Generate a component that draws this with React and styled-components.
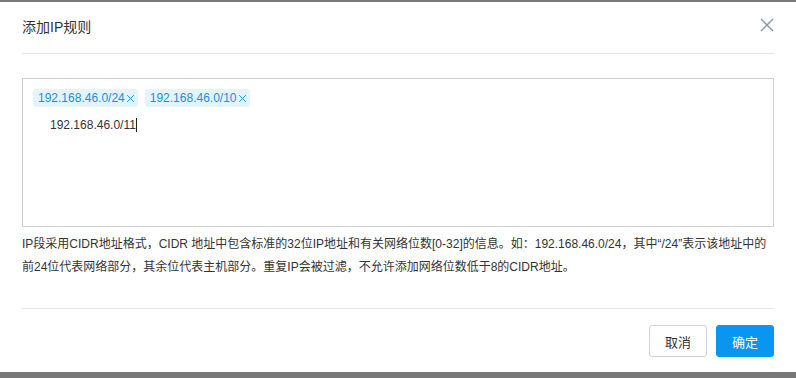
import React from 'react';
import styled, { createGlobalStyle } from 'styled-components';

const GlobalStyle = createGlobalStyle`
  html, body {
    margin: 0;
    padding: 0;
    background: #787878;
    font-family: "Liberation Sans", "Noto Sans CJK SC", sans-serif;
  }
`;

const Dialog = styled.div`
  margin-top: 2px;
  width: 796px;
  height: 370px;
  background: #fff;
  padding: 0 22px;
  box-sizing: border-box;
  display: flex;
  flex-direction: column;
`;

const Header = styled.div`
  height: 51px;
  display: flex;
  align-items: center;
  justify-content: space-between;
  border-bottom: 1px solid #e6e6e6;
`;

const Title = styled.h3`
  margin: 0;
  font-size: 14px;
  font-weight: normal;
  color: #333;
  padding-bottom: 4px;
`;

const CloseButton = styled.button`
  border: 0;
  background: none;
  padding: 0;
  width: 16px;
  height: 16px;
  display: flex;
  align-items: center;
  justify-content: center;
  margin-right: -1px;
  margin-bottom: 5px;
  cursor: pointer;
`;

const Body = styled.div`
  padding-top: 24px;
  flex: 1;
`;

const TagBox = styled.div`
  height: 149px;
  border: 1px solid #cfcfcf;
  box-sizing: border-box;
  padding: 10px 10px;
`;

const TagRow = styled.div`
  display: flex;
  gap: 7px;
`;

const Tag = styled.span`
  display: inline-flex;
  align-items: center;
  height: 18px;
  padding: 0 3px 0 5px;
  border-radius: 3px;
  background: #e4f4ff;
  color: #1a8fe0;
  font-size: 12px;
  gap: 1px;
`;

const TagClose = styled.span`
  display: inline-flex;
  align-items: center;
`;

const Input = styled.div`
  margin-top: 11px;
  padding-left: 17px;
  font-size: 12px;
  color: #333;
  display: flex;
  align-items: center;
  height: 14px;
`;

const Caret = styled.span`
  display: inline-block;
  width: 1px;
  height: 14px;
  background: #222;
`;

const Help = styled.p`
  margin: 6px 0 0;
  font-size: 12px;
  line-height: 23px;
  color: #333;
`;

const Footer = styled.div`
  border-top: 1px solid #e6e6e6;
  margin-top: 1px;
  padding: 16px 0 15px;
  display: flex;
  justify-content: flex-end;
  gap: 9px;
`;

const Button = styled.button`
  width: 58px;
  height: 32px;
  border-radius: 3px;
  font-size: 13px;
  font-family: inherit;
  border: 1px solid ${({ primary }) => (primary ? '#0a96f0' : '#cfd3d8')};
  background: ${({ primary }) => (primary ? '#0a96f0' : '#fff')};
  color: ${({ primary }) => (primary ? '#fff' : '#333')};
  cursor: pointer;
`;

const XIcon = ({ size, color, width }) => (
  <svg width={size} height={size} viewBox="0 0 16 16">
    <path d="M2 2L14 14M14 2L2 14" stroke={color} strokeWidth={width} fill="none" />
  </svg>
);

const tags = ['192.168.46.0/24', '192.168.46.0/10'];

export default function App() {
  return (
    <>
      <GlobalStyle />
      <Dialog>
        <Header>
          <Title>添加IP规则</Title>
          <CloseButton>
            <XIcon size={16} color="#8a96a3" width={1.4} />
          </CloseButton>
        </Header>
        <Body>
          <TagBox>
            <TagRow>
              {tags.map((t) => (
                <Tag key={t}>
                  {t}
                  <TagClose>
                    <XIcon size={9} color="#1a8fe0" width={1.6} />
                  </TagClose>
                </Tag>
              ))}
            </TagRow>
            <Input>
              192.168.46.0/11
              <Caret />
            </Input>
          </TagBox>
          <Help>
            IP段采用CIDR地址格式，CIDR 地址中包含标准的32位IP地址和有关网络位数[0-32]的信息。如：192.168.46.0/24，其中“/24”表示该地址中的前24位代表网络部分，其余位代表主机部分。重复IP会被过滤，不允许添加网络位数低于8的CIDR地址。
          </Help>
        </Body>
        <Footer>
          <Button>取消</Button>
          <Button primary>确定</Button>
        </Footer>
      </Dialog>
    </>
  );
}
